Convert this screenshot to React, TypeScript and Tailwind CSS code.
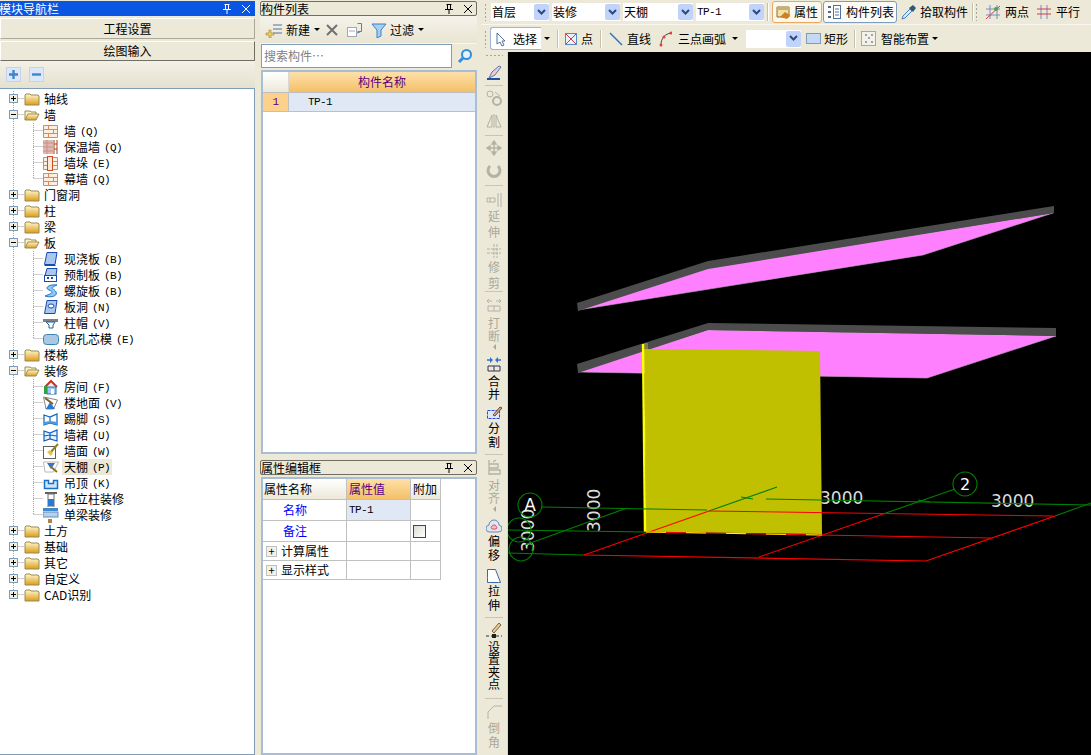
import type { ReactNode } from 'react';

const mono = "font-['Liberation_Mono','Noto_Sans_CJK_SC',monospace] text-[11px] tracking-[-0.6px]";

function Ico({ w = 16, h = 16, children }: { w?: number; h?: number; children: ReactNode }) {
  return (
    <svg width={w} height={h} viewBox={`0 0 ${w} ${h}`} className="shrink-0 block">
      {children}
    </svg>
  );
}

// tree icons
function Folder({ open }: { open?: boolean }) {
  return (
    <Ico>
      <defs>
        <linearGradient id="fold" x1="0" y1="0" x2="0" y2="1">
          <stop offset="0" stopColor="#fff8d0" />
          <stop offset="1" stopColor="#dc9c18" />
        </linearGradient>
      </defs>
      {open ? (
        <>
          <path d="M1 13V4h5l1 1h5v2" fill="#fdf2c0" stroke="#9a8a50" />
          <path d="M1 13l3-6h11l-3 6z" fill="url(#fold)" stroke="#9a8a50" />
        </>
      ) : (
        <path d="M1 14V4l1-1h4l1 1h7l1 1v9z" fill="url(#fold)" stroke="#9a8a50" />
      )}
    </Ico>
  );
}

const treeIcons: Record<string, ReactNode> = {
  brick: (
    <path d="M.5 2.5h14v12H.5zM.5 6.5h14M.5 10.5h14M5.5 2.5v4M10.5 6.5v4M5.5 10.5v4" fill="#fdeee0" stroke="#e08850" />
  ),
  insul: (
    <>
      <rect x="0" y="1" width="10" height="14" fill="#e0b8b0" />
      <path d="M0 4h10M0 8h10M0 12h10M4 1v14" stroke="#c89088" />
      <path d="M11 1v14M14 1v14M11 5h3M11 10h3" stroke="#a04020" fill="none" />
    </>
  ),
  pier: (
    <>
      <path d="M.5 2.5h14v12H.5zM.5 6.5h14M.5 10.5h14" fill="#fdeee0" stroke="#e08850" />
      <rect x="4.5" y="1.5" width="5" height="14" fill="#fde8d8" stroke="#c85020" />
    </>
  ),
  slab: <path d="M4 1.5h10l-2 12H1.5z M1.5 14.5h11" fill="#a8c8f0" stroke="#1848b0" />,
  pre: (
    <>
      <path d="M4 1.5h10l-1 7H2z" fill="#a8c8f0" stroke="#1848b0" />
      <rect x="1.5" y="8.5" width="12" height="6" fill="#fff" stroke="#1848b0" />
      <path d="M4 11h2M8 11h2" stroke="#1848b0" strokeWidth="2" />
    </>
  ),
  spiral: <path d="M14 2C6 1 1 5 6 7s4 3-4 6c6 2 13 0 11-4S5 6 14 2z" fill="#90c8f0" stroke="#2070d0" />,
  hole: (
    <>
      <path d="M4 1.5h10l-2 13H1.5z" fill="#a8c8f0" stroke="#1848b0" />
      <ellipse cx="8" cy="7" rx="3" ry="2" fill="#fff" stroke="#1848b0" />
    </>
  ),
  cap: (
    <>
      <rect x="0" y="4" width="15" height="3" fill="#808080" />
      <path d="M3 7h9l-2 3v3H6v-3z" fill="#fff" stroke="#2060a0" />
    </>
  ),
  core: <rect x=".5" y="3.5" width="15" height="10" rx="3" fill="#a8c8e4" stroke="#4080b0" />,
  room: (
    <>
      <path d="M2 8l6-6 6 6" fill="#f0f0f0" stroke="#d03020" strokeWidth="2" />
      <rect x="4" y="8" width="9" height="7" fill="#a0c8f0" stroke="#3070b0" />
      <rect x="1" y="7" width="3" height="8" fill="#30a040" />
      <rect x="8" y="10" width="3" height="5" fill="#fff" />
    </>
  ),
  floor: (
    <>
      <path d="M.5 2l14 3-4 9H3z" fill="#fff" stroke="#888" />
      <path d="M3 14l4-7 5 7z" fill="#2878d8" />
      <path d="M2 3l8 6" stroke="#806020" strokeWidth="2" />
    </>
  ),
  skirt: (
    <>
      <path d="M1 4l6 2 7-3v11l-7-2-6 2zM7 6v6" fill="#fff" stroke="#1060c0" strokeWidth="1.2" />
      <path d="M1 11l6-1 7 1v3l-7-2-6 2z" fill="#5098e0" />
    </>
  ),
  dado: (
    <>
      <path d="M1 4l6 2 7-3v11l-7-2-6 2zM7 6v6M1 9l6-1 7 1" fill="#e8f2fc" stroke="#1060c0" strokeWidth="1.2" />
    </>
  ),
  wallf: (
    <>
      <rect x=".5" y="3.5" width="12" height="12" fill="#fff" stroke="#606060" />
      <path d="M15 1l-8 9" stroke="#908020" strokeWidth="2" />
      <path d="M4 9l4 4 2-3-3-3z" fill="#e8c040" />
    </>
  ),
  ceil: (
    <>
      <path d="M.5 3h15l-5 10H2z" fill="#fff" stroke="#b8b8b8" />
      <path d="M4 4h8l-4 6z" fill="#2878d8" />
      <path d="M7 7l7 6" stroke="#907020" strokeWidth="2" />
    </>
  ),
  drop: <path d="M1.5 5.5h4v3h5v-3h4v8h-13z" fill="#d0e4f8" stroke="#1870c8" strokeWidth="1.5" />,
  col: (
    <>
      <rect x="2" y="1" width="12" height="2" fill="#606060" />
      <path d="M5 3h6v13H5z" fill="#fff" stroke="#707070" />
      <rect x="5" y="8" width="6" height="7" fill="#2878d8" />
    </>
  ),
  beam: (
    <>
      <rect x="0" y="1" width="15" height="3" fill="#4088d0" />
      <rect x="0" y="5" width="15" height="5" fill="#b8d0e8" stroke="#6090c0" />
      <rect x="5" y="12" width="4" height="5" fill="#b08050" />
    </>
  ),
};

type Node = { label: string; key?: string; icon?: string; children?: Node[] };

const tree: Node[] = [
  { label: '轴线' },
  {
    label: '墙',
    children: [
      { label: '墙', key: '(Q)', icon: 'brick' },
      { label: '保温墙', key: '(Q)', icon: 'insul' },
      { label: '墙垛', key: '(E)', icon: 'pier' },
      { label: '幕墙', key: '(Q)', icon: 'brick' },
    ],
  },
  { label: '门窗洞' },
  { label: '柱' },
  { label: '梁' },
  {
    label: '板',
    children: [
      { label: '现浇板', key: '(B)', icon: 'slab' },
      { label: '预制板', key: '(B)', icon: 'pre' },
      { label: '螺旋板', key: '(B)', icon: 'spiral' },
      { label: '板洞', key: '(N)', icon: 'hole' },
      { label: '柱帽', key: '(V)', icon: 'cap' },
      { label: '成孔芯模', key: '(E)', icon: 'core' },
    ],
  },
  { label: '楼梯' },
  {
    label: '装修',
    children: [
      { label: '房间', key: '(F)', icon: 'room' },
      { label: '楼地面', key: '(V)', icon: 'floor' },
      { label: '踢脚', key: '(S)', icon: 'skirt' },
      { label: '墙裙', key: '(U)', icon: 'dado' },
      { label: '墙面', key: '(W)', icon: 'wallf' },
      { label: '天棚', key: '(P)', icon: 'ceil' },
      { label: '吊顶', key: '(K)', icon: 'drop' },
      { label: '独立柱装修', icon: 'col' },
      { label: '单梁装修', icon: 'beam' },
    ],
  },
  { label: '土方' },
  { label: '基础' },
  { label: '其它' },
  { label: '自定义' },
  { label: 'CAD识别' },
];

function Expander({ x, open }: { x: number; open?: boolean }) {
  return (
    <>
      <rect x={x - 3.5} y="3.5" width="8" height="8" fill="#f2f0e4" stroke="#7f9db9" />
      <path d={open ? `M${x - 2} 7.5h5` : `M${x - 2} 7.5h5M${x + 0.5} 5v5`} stroke="#000" />
    </>
  );
}

const dots = { stroke: '#a0a0a0', strokeDasharray: '1 1', fill: 'none' };

function TopRow({ node, last }: { node: Node; last: boolean }) {
  const open = !!node.children;
  return (
    <div className="flex h-4 items-center">
      <Ico w={24} h={16}>
        <path d={`M13.5 ${last ? '0V8' : '0V16'}M13.5 7.5H24`} {...dots} />
        <Expander x={13} open={open} />
      </Ico>
      <Folder open={open} />
      <span className="ml-1 leading-4">{node.label}</span>
    </div>
  );
}

function ChildRow({ node, last, sel }: { node: Node; last: boolean; sel: boolean }) {
  return (
    <div className="flex h-4 items-center">
      <Ico w={43} h={16}>
        <path d={`M13.5 0V16M33.5 ${last ? '0V8' : '0V16'}M33.5 7.5H43`} {...dots} />
      </Ico>
      <Ico>{treeIcons[node.icon ?? 'brick']}</Ico>
      <span className={`ml-[3px] flex h-4 items-center px-[2px] leading-4 ${sel ? 'bg-[#ece9d8]' : ''}`}>
        {node.label}
        {node.key && <span className={`ml-[4px] pt-[1px] ${mono}`}>{node.key}</span>}
      </span>
    </div>
  );
}

function PinClose({ dark }: { dark?: boolean }) {
  const c = dark ? '#000' : '#fff';
  return (
    <div className="ml-auto flex items-center gap-[7px]">
      <Ico w={12} h={12}>
        <path d="M3.5 1.5h5M4.5 1.5v5M7.5 1.5v5M2 6.5h8M6 7v4" stroke={c} fill="none" />
      </Ico>
      <Ico w={12} h={12}>
        <path d="M2 2l8 8M10 2l-8 8" stroke={c} fill="none" />
      </Ico>
    </div>
  );
}

function PaneTitle({ title }: { title: string }) {
  return (
    <div className="flex h-[15px] items-center rounded-[2px] border border-[#6f6e62] pr-[2px] leading-none">
      <span>{title}</span>
      <PinClose dark />
    </div>
  );
}

function LeftPanel() {
  return (
    <aside className="flex h-full w-[255px] shrink-0 flex-col pt-[1px]">
      <div className="flex h-[15px] items-center bg-[#0a56e2] pr-[3px] text-white">
        <span className="-ml-[1px]">模块导航栏</span>
        <PinClose />
      </div>
      <div className="mt-[2px] flex h-[21px] items-center justify-center border border-t-white border-l-white border-r-[#aca899] border-b-[#aca899]">工程设置</div>
      <div className="mt-[2px] flex h-[20px] items-center justify-center border border-t-white border-l-white border-r-[#716f64] border-b-[#716f64]">绘图输入</div>
      <div className="flex h-[27px] items-center gap-[8px] bg-gradient-to-b from-[#f3f1e6] to-[#e4e1cf] pl-[6px]">
        {['M3 7.5h9M7.5 3v9', 'M3 7.5h9'].map((d) => (
          <Ico w={15} h={15} key={d}>
            <rect x=".5" y=".5" width="14" height="14" fill="#dde7fa" stroke="#c4d2f2" />
            <path d={d} stroke="#3d86c6" strokeWidth="2.4" />
          </Ico>
        ))}
      </div>
      <div className="min-h-0 flex-1 border border-l-0 border-[#7f9db9] bg-white pt-[2px]">
        {tree.map((n, i) => (
          <div key={n.label}>
            <TopRow node={n} last={i === tree.length - 1} />
            {n.children?.map((c, j) => (
              <ChildRow key={c.label + j} node={c} last={j === n.children!.length - 1} sel={c.label === '天棚'} />
            ))}
          </div>
        ))}
      </div>
    </aside>
  );
}

function Caret() {
  return <span className="inline-block h-0 w-0 border-x-[3px] border-t-[3px] border-x-transparent border-t-black" />;
}

function ComponentPane() {
  return (
    <div className="flex min-h-0 flex-1 flex-col">
      <PaneTitle title="构件列表" />
      <div className="flex h-[27px] items-center bg-gradient-to-b from-[#f5f3ea] to-[#e8e5d4] pl-[5px]">
        <Ico w={18} h={16}>
          <path d="M8 3h9M8 7h9M8 11h9" stroke="#5070a0" fill="none" />
          <path d="M4 8h2v3h3v2H6v3H4v-3H1v-2h3z" fill="#f0d060" stroke="#a08030" strokeWidth=".6" />
        </Ico>
        <span className="ml-[3px]">新建</span>
        <span className="ml-[4px] flex"><Caret /></span>
        <span className="ml-[5px] flex">
          <Ico w={14} h={14}>
            <path d="M2 2l10 10M12 2L2 12" stroke="#707070" strokeWidth="2" />
          </Ico>
        </span>
        <span className="ml-[7px] flex">
          <Ico w={18} h={16}>
            <rect x="1.5" y="5.5" width="9" height="9" fill="#fff" stroke="#a0a8b8" />
            <path d="M3 9h6" stroke="#a0a8b8" />
            <path d="M11.5 1.5h4v8h-4M11 11l3-1" stroke="#5080c0" fill="none" />
          </Ico>
        </span>
        <span className="ml-[7px] flex">
          <Ico w={16} h={16}>
            <path d="M1 2h14L10 8v6l-4 2V8z" fill="#a8d0f4" stroke="#3880c8" />
          </Ico>
        </span>
        <span className="ml-[3px]">过滤</span>
        <span className="ml-[4px] flex"><Caret /></span>
      </div>
      <div className="flex h-[25px] items-center border-t border-[#f8f6ee] pl-[1px]">
        <div className="flex h-[24px] w-[191px] items-center border border-[#7f9db9] bg-white pl-[2px] text-[#808080]">搜索构件…</div>
        <span className="ml-[5px] flex">
          <Ico w={16} h={16}>
            <circle cx="9.5" cy="6.5" r="4.5" fill="#e4f2fc" stroke="#2f8ee0" strokeWidth="2" />
            <path d="M6 10l-4 4" stroke="#2f8ee0" strokeWidth="3" />
          </Ico>
        </span>
      </div>
      <div className="ml-[1px] mt-[2px] min-h-0 flex-1 border-2 border-[#a8bdd6] bg-white">
        <div className="flex h-[21px] border-b border-[#c0c0c0]">
          <div className="w-[26px] border-r border-[#d8d8d8] bg-gradient-to-b from-white to-[#ece9d8]" />
          <div className="flex flex-1 items-center justify-center bg-gradient-to-b from-[#fde0a8] to-[#f4c068] text-[#5a0080]">构件名称</div>
        </div>
        <div className="flex h-[19px] border-b border-[#c0c0c0]">
          <div className={`flex w-[26px] items-center justify-center border-r border-[#c0c0c0] bg-[#fdd08c] text-[#5a0080] ${mono}`}>1</div>
          <div className={`flex flex-1 items-center bg-[#e0e8f5] pl-[19px] ${mono}`}>TP-1</div>
        </div>
      </div>
    </div>
  );
}

function PropCell({ className, children }: { className: string; children?: ReactNode }) {
  return <div className={`flex items-center border-r border-b border-[#c0c0c0] ${className}`}>{children}</div>;
}

function PlusBox() {
  return (
    <span className="mr-[4px] flex h-[11px] w-[11px] items-center justify-center border border-[#c0c0c0] bg-[#f4f2e8] text-[11px] leading-none">+</span>
  );
}

function PropertyPane() {
  const rows = 'grid grid-cols-[84px_64px_30px]';
  return (
    <div className="mt-[6px] flex h-[295px] flex-col">
      <PaneTitle title="属性编辑框" />
      <div className="ml-[1px] mt-[2px] min-h-0 flex-1 border-2 border-[#a8bdd6] bg-white">
        <div className={`${rows} h-[21px]`}>
          <PropCell className="bg-gradient-to-b from-white to-[#ece9d8] pl-[1px]">属性名称</PropCell>
          <PropCell className="bg-gradient-to-b from-[#fde0a8] to-[#f4c068] pl-[2px] text-[#5a0080]">属性值</PropCell>
          <PropCell className="bg-gradient-to-b from-white to-[#ece9d8] pl-[2px]">附加</PropCell>
        </div>
        <div className={`${rows} h-[21px]`}>
          <PropCell className="pl-[20px] text-[#0000ff]">名称</PropCell>
          <PropCell className={`bg-[#e0e8f5] pl-[2px] ${mono}`}>TP-1</PropCell>
          <PropCell className="" />
        </div>
        <div className={`${rows} h-[21px]`}>
          <PropCell className="pl-[20px] text-[#0000ff]">备注</PropCell>
          <PropCell className="" />
          <PropCell className="pl-[2px]">
            <span className="h-[13px] w-[13px] border border-[#1c5180] bg-gradient-to-br from-[#dcdcd4] to-white" />
          </PropCell>
        </div>
        {['计算属性', '显示样式'].map((t) => (
          <div className={`${rows} h-[19px]`} key={t}>
            <PropCell className="pl-[3px]">
              <PlusBox />
              {t}
            </PropCell>
            <PropCell className="" />
            <PropCell className="" />
          </div>
        ))}
      </div>
    </div>
  );
}

function Grip() {
  return <div className="mr-[3px] h-[18px] w-[3px] shrink-0 bg-[radial-gradient(#a8a594_40%,transparent_45%)] bg-[length:3px_4px]" />;
}

function Sel({ w, label, latin }: { w: string; label?: string; latin?: boolean }) {
  return (
    <div className={`flex h-[18px] items-center bg-white pl-[1px] ${w}`}>
      <span className={latin ? mono : ''}>{label}</span>
      <span className="ml-auto flex h-[16px] w-[15px] items-center justify-center rounded-[2px] bg-[#c1d3fb]">
        <Ico w={9} h={7}>
          <path d="M1 1l3.5 3.5L8 1" stroke="#2a4a80" strokeWidth="2" fill="none" />
        </Ico>
      </span>
    </div>
  );
}

function Sep() {
  return <div className="h-[18px] w-[2px] shrink-0 border-r border-white bg-[#c4c1b0]" />;
}

function TopToolbars() {
  return (
    <div className="h-[52px] shrink-0">
      <div className="flex h-[25px] items-center border-b border-[#f8f6ee] pl-[3px]">
        <Grip />
        <div className="ml-[1px] flex gap-[3px]">
          <Sel w="w-[58px]" label="首层" />
          <Sel w="w-[68px]" label="装修" />
          <Sel w="w-[70px]" label="天棚" />
          <Sel w="w-[68px]" label="TP-1" latin />
        </div>
        <div className="ml-[3px]"><Sep /></div>
        <div className="ml-[3px] flex h-[22px] w-[50px] items-center gap-[2px] rounded-[3px] border border-[#e8a860] bg-[#fdf8ec] pl-[3px]">
          <Ico w={16} h={16}>
            <path d="M1 3h12v10H1z" fill="#f4e0a0" stroke="#807040" />
            <path d="M1 3h12v3H1z" fill="#c8b070" />
            <path d="M4 13l5-5 5 3-3 4z" fill="#d08020" />
          </Ico>
          <span>属性</span>
        </div>
        <div className="ml-[1px] flex h-[22px] w-[74px] items-center gap-[4px] rounded-[3px] border border-[#7f9db9] bg-[#fbfbf7] pl-[3px]">
          <Ico w={15} h={16}>
            <path d="M1 3h3M1 8h3M1 13h3" stroke="#506880" strokeWidth="2" />
            <rect x="6.5" y="1.5" width="7" height="13" fill="#fff" stroke="#5070a0" />
            <path d="M8 5h4M8 8h4M8 11h4" stroke="#5070a0" />
          </Ico>
          <span>构件列表</span>
        </div>
        <span className="ml-[3px] flex">
          <Ico w={17} h={17}>
            <path d="M2 15l1-3 7-7 2 2-7 7z" fill="#d8ecfc" stroke="#4080c0" />
            <path d="M9 4l4-3 3 3-3 4z" fill="#305878" />
          </Ico>
        </span>
        <span className="ml-[3px]">拾取构件</span>
        <div className="ml-[4px]"><Sep /></div>
        <div className="ml-[1px]"><Grip /></div>
        <span className="ml-[4px] flex">
          <Ico w={16} h={16}>
            <path d="M5 1v14M12 1v14M1 5h14M1 11h14" stroke="#7888c8" />
            <path d="M1 15L15 2" stroke="#d04040" />
            <circle cx="11" cy="5" r="2" fill="#50a050" />
          </Ico>
        </span>
        <span className="ml-[4px]">两点</span>
        <span className="ml-[7px] flex">
          <Ico w={16} h={16}>
            <path d="M5 1v14M11 1v14" stroke="#7888c8" />
            <path d="M1 5h14M1 10h14" stroke="#d04040" />
          </Ico>
        </span>
        <span className="ml-[4px]">平行</span>
      </div>
      <div className="flex h-[27px] items-center pl-[3px]">
        <Grip />
        <div className="flex h-[23px] w-[51px] items-center gap-[6px] rounded-l-[3px] border border-r-0 border-[#9fb4d0] bg-white pl-[4px]">
          <Ico w={12} h={16}>
            <path d="M2 2v11l3-2 2 4 2-1-2-4h3z" fill="#fff" stroke="#5070a0" />
          </Ico>
          <span>选择</span>
        </div>
        <span className="ml-[3px] flex"><Caret /></span>
        <div className="ml-[7px]"><Sep /></div>
        <span className="ml-[6px] flex">
          <Ico w={12} h={12}>
            <rect x=".5" y=".5" width="11" height="11" fill="#e8f0fc" stroke="#5888c0" />
            <path d="M1 1l10 10M11 1L1 11" stroke="#c84040" />
          </Ico>
        </span>
        <span className="ml-[4px]">点</span>
        <div className="ml-[7px]"><Sep /></div>
        <span className="ml-[7px] flex">
          <Ico w={14} h={14}>
            <path d="M1 1l12 12" stroke="#2f6fc0" strokeWidth="1.4" />
          </Ico>
        </span>
        <span className="ml-[4px]">直线</span>
        <span className="ml-[8px] flex">
          <Ico w={13} h={16}>
            <path d="M2 14C2 7 6 3 12 2" stroke="#404040" fill="none" />
            <circle cx="2" cy="14" r="1.5" fill="#e04040" />
            <circle cx="5" cy="6" r="1.5" fill="#e04040" />
            <circle cx="12" cy="2" r="1.5" fill="#e04040" />
          </Ico>
        </span>
        <span className="ml-[6px]">三点画弧</span>
        <span className="ml-[6px] flex"><Caret /></span>
        <div className="ml-[8px]">
          <Sel w="w-[55px]" />
        </div>
        <span className="ml-[5px] flex">
          <Ico w={15} h={12}>
            <rect x=".5" y=".5" width="14" height="10" fill="#c4d8f8" stroke="#7f9db9" />
          </Ico>
        </span>
        <span className="ml-[3px]">矩形</span>
        <div className="ml-[6px]"><Sep /></div>
        <span className="ml-[5px] flex">
          <Ico w={15} h={15}>
            <rect x=".5" y=".5" width="14" height="14" fill="#f4f2e8" stroke="#606060" strokeDasharray="1 1" />
            <path d="M4 4h2M10 4h2M4 11h2M10 11h2M7 7h2" stroke="#305878" />
          </Ico>
        </span>
        <span className="ml-[5px]">智能布置</span>
        <span className="ml-[3px] flex"><Caret /></span>
      </div>
    </div>
  );
}

function VSep({ className }: { className: string }) {
  return <div className={`mx-[4px] h-[1px] shrink-0 bg-[#c8c5b4] ${className}`} />;
}

function VTool({ chars, off, caret, icon, className, lead }: { chars?: string; off?: boolean; caret?: boolean; icon: ReactNode; className: string; lead?: string }) {
  return (
    <div className={`flex shrink-0 flex-col items-center ${off ? 'text-[#aca899]' : 'text-black'} ${className}`}>
      <Ico>{icon}</Ico>
      {chars && (
        <div className={`flex flex-col items-center ${lead ?? 'mt-[3px] leading-[13px]'}`}>
          {chars.split('').map((c, i) => (
            <span key={i}>{c}</span>
          ))}
        </div>
      )}
      {caret && <span className="mt-[2px] h-0 w-0 border-y-[3px] border-r-[3px] border-y-transparent border-r-[#aca899]" />}
    </div>
  );
}

function VerticalToolbar() {
  const g = '#b4b2a4';
  return (
    <div className="flex w-[27px] shrink-0 flex-col overflow-hidden border-r border-[#d8d5c4] pt-[2px]">
      <div className="mx-auto h-[3px] w-[18px] shrink-0 bg-[radial-gradient(#a8a594_40%,transparent_45%)] bg-[length:4px_3px]" />
      <VTool className="mt-[7px]" icon={<><path d="M3 14l3-6 7-6 2 1-6 8z" fill="#f0c8e0" stroke="#5878a0" /><path d="M1 15h13" stroke="#2050a0" strokeWidth="2" /></>} />
      <VSep className="mt-[5px]" />
      <VTool off className="mt-[4px]" icon={<><circle cx="4" cy="4" r="3" fill="none" stroke={g} /><circle cx="11" cy="11" r="4" fill="none" stroke={g} strokeWidth="2" /><path d="M9 2l5 4" stroke={g} /></>} />
      <VTool off className="mt-[7px]" icon={<path d="M6 2L1 14h5zM10 2l5 12h-5zM8 1v14" fill="none" stroke={g} />} />
      <VSep className="mt-[6px]" />
      <VTool off className="mt-[4px]" icon={<path d="M8 1v14M1 8h14M8 1l-2 3h4zM8 15l-2-3h4zM1 8l3-2v4zM15 8l-3-2v4z" fill={g} stroke={g} strokeWidth="1.4" />} />
      <VTool off className="mt-[7px]" icon={<path d="M4 3a6 6 0 1 0 8 0" fill="none" stroke={g} strokeWidth="3" />} />
      <VSep className="mt-[6px]" />
      <VTool off chars="延伸" lead="leading-[16px]" className="mt-[6px]" icon={<path d="M12 1v14M15 1v14M1 6h8v4H1zM4 6v4" fill="none" stroke={g} />} />
      <VTool off chars="修剪" lead="leading-[16px]" className="mt-[3px]" icon={<path d="M8 1v14M11 1v14M1 6h14M1 10h14" fill="none" stroke={g} strokeDasharray="3 1" />} />
      <VSep className="mt-[0px]" />
      <VTool off chars="打断" caret className="mt-[5px]" icon={<path d="M1 4h5M10 4h5M3 2L1 4l2 2M13 2l2 2-2 2M2 9h12v5H2zM8 9v5" fill="none" stroke={g} />} />
      <VTool chars="合并" className="mt-[6px]" lead="mt-[2px] leading-[13px]" icon={<><path d="M1 4h5M10 4h5" stroke="#3070d0" strokeWidth="1.5" /><path d="M7 4L4 1v6zM9 4l3-3v6z" fill="#3070d0" /><path d="M2 10h12v5H2zM8 10v5" fill="none" stroke="#303050" /></>} />
      <VTool chars="分割" className="mt-[5px]" lead="leading-[13.5px]" icon={<><rect x="1.5" y="5.5" width="12" height="8" fill="#dde8fc" stroke="#2848d8" strokeDasharray="3 1" /><path d="M7 10l7-8 2 1-7 8z" fill="#d8a878" stroke="#605040" /></>} />
      <VSep className="mt-[6px]" />
      <VTool off chars="对齐" caret className="mt-[4px]" icon={<path d="M3 1v15M3 5h9v4H3zM3 11h11v4H3zM7 3l3-2" fill="none" stroke={g} strokeWidth="1.3" />} />
      <VTool chars="偏移" className="mt-[6px]" lead="leading-[14px]" icon={<><path d="M4 14a3.5 3.5 0 0 1-1-7 5 5 0 0 1 10 0 3.5 3.5 0 0 1-1 7z" fill="#dce6f4" stroke="#6888b0" /><path d="M6 11a2 2 0 0 1 0-3 2.5 2.5 0 0 1 4 0 2 2 0 0 1 0 3z" fill="#f4c0c0" stroke="#e05050" /></>} />
      <VTool chars="拉伸" className="mt-[6px]" lead="leading-[14px]" icon={<path d="M1.5 1.5h8l5 13h-13z" fill="#fff" stroke="#3868a8" strokeDasharray="8 0" />} />
      <VSep className="mt-[5px]" />
      <VTool chars="设置夹点" className="mt-[4px]" lead="mt-[3px] leading-[12.4px]" icon={<><path d="M6 9l7-8 2 2-7 8z" fill="#e8c890" stroke="#806040" /><path d="M0 14h16" stroke="#303030" strokeDasharray="3 2" /><rect x="6" y="12" width="4" height="4" fill="#202020" /></>} />
      <VSep className="mt-[7px]" />
      <VTool off chars="倒角" className="mt-[5px]" lead="mt-[1px] leading-[14px]" icon={<path d="M2 15V8l6-6h8" fill="none" stroke={g} />} />
    </div>
  );
}

// 3D view, coordinates are screen pixels
function Canvas() {
  const text = { fill: '#dcdcdc', fontSize: 17, fontFamily: "'DejaVu Sans', sans-serif" };
  return (
    <div className="min-w-0 flex-1 bg-black">
      <svg width="583" height="703" viewBox="508 52 583 703" className="block">
        <polygon points="578,310 708,268 1053,213 923,255" fill="#ff80ff" stroke="#c8a8c8" strokeWidth=".6" />
        <polygon points="577,303 708,261 1054,206 1054,213 708,269 578,311" fill="#4c4c4c" />
        <polygon points="578,372 708,330 1056,336 927,378" fill="#ff80ff" stroke="#c8a8c8" strokeWidth=".6" />
        <polygon points="577,364 708,323 1056,328 1056,336 708,330 578,373" fill="#4c4c4c" />

        <text x="820" y="504" {...text}>3000</text>
        <text x="991" y="507" {...text}>3000</text>
        <text transform="translate(600 532) rotate(-90)" {...text}>3000</text>
        <text transform="translate(534 552) rotate(-90)" {...text}>3000</text>

        <polygon points="644,343 648,343 648,349 644,349" fill="#808040" />
        <polygon points="644,349 820,351 822,534 646,532" fill="#c0c000" />
        <polyline points="643,344 645,532" stroke="#ffff00" strokeWidth="2.4" fill="none" />

        <g fill="none" stroke="#008000" strokeWidth="1.1">
          <circle cx="530" cy="505" r="12" />
          <circle cx="519" cy="530" r="12" />
          <circle cx="521" cy="549" r="12" />
          <circle cx="965" cy="484" r="12" />
          <path d="M541 507L707 510M766 499L1091 505M508 530L646 532M508 553L584 555" />
          <path d="M525 545L627 508M709 511L777 487M886 513L955 489M1055 516L1091 503" />
          <path d="M741 497l12 2M918 500l12 2" />
        </g>
        <g fill="none" stroke="#ff0000" strokeWidth="1.1">
          <path d="M709 511L1053 516M646 532L991 538M584 555L926 561" />
          <path d="M584 555L709 511M759 557L886 513M926 561L1055 516" />
        </g>
        <polyline points="646,532 822,535" stroke="#ffff00" strokeWidth="1" strokeDasharray="20 20" fill="none" />
        <text x="530" y="511" textAnchor="middle" fill="#fff" fontSize="17" fontFamily="'DejaVu Sans', sans-serif">A</text>
        <text x="965" y="490" textAnchor="middle" fill="#fff" fontSize="16" fontFamily="'DejaVu Sans', sans-serif">2</text>
      </svg>
    </div>
  );
}

export default function App() {
  return (
    <div className="flex h-[755px] w-[1091px] overflow-hidden bg-[#ece9d8] font-['Noto_Sans_CJK_SC',sans-serif] text-[12px] text-black">
      <LeftPanel />
      <div className="ml-[5px] flex h-full w-[217px] shrink-0 flex-col pt-[1px]">
        <ComponentPane />
        <PropertyPane />
      </div>
      <div className="ml-[4px] flex min-w-0 flex-1 flex-col">
        <TopToolbars />
        <div className="flex min-h-0 flex-1">
          <VerticalToolbar />
          <Canvas />
        </div>
      </div>
    </div>
  );
}
